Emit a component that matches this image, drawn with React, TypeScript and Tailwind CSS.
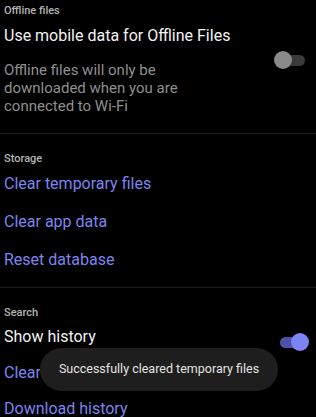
import React from "react";

function Toggle({ on }: { on: boolean }) {
  return (
    <div className="relative w-[36px] h-[18px] shrink-0">
      <div
        className={
          on
            ? "absolute left-[6px] top-[4px] w-[25px] h-[11px] rounded-full bg-[#4d52a8]"
            : "absolute left-[6px] top-[4px] w-[25px] h-[11px] rounded-full bg-[#3a3a3a]"
        }
      />
      <div
        className={
          on
            ? "absolute left-[17px] top-0 w-[18px] h-[18px] rounded-full bg-[#7c84f4]"
            : "absolute left-0 top-0 w-[18px] h-[18px] rounded-full bg-[#8a8a8a]"
        }
      />
    </div>
  );
}

function SectionHeader({ children }: { children: React.ReactNode }) {
  return (
    <div className="h-[14px] flex items-center text-[11px] font-medium text-[#b4b4b4] leading-none">
      {children}
    </div>
  );
}

function LinkRow({ label, h = "h-[38px]" }: { label: string; h?: string }) {
  return (
    <div className={`${h} flex items-center text-[16px] text-[#7d84ef]`}>{label}</div>
  );
}

export default function App() {
  return (
    <div
      className="relative w-[316px] h-[417px] overflow-hidden bg-black"
      style={{ fontFamily: "Roboto, 'Noto Sans', sans-serif" }}
    >
      <div className="pl-[4px]">
        {/* Offline files */}
        <div className="h-[22px] flex items-center text-[11px] font-medium text-[#b4b4b4]">
          Offline files
        </div>
        <div className="flex justify-between">
          <div>
            <div className="h-[28px] flex items-center text-[16px] text-[#f2f2f2]">
              Use mobile data for Offline Files
            </div>
            <div className="mt-[11px] w-[200px] text-[15px] leading-[18px] text-[#8f8f8f]">
              Offline files will only be downloaded when you are connected to Wi-Fi
            </div>
          </div>
          <div className="mt-[29px] mr-[6px]">
            <Toggle on={false} />
          </div>
        </div>
      </div>

      <div className="mt-[18px] h-px bg-[#1c1c1c]" />

      {/* Storage */}
      <div className="pl-[4px] pt-[17px]">
        <SectionHeader>Storage</SectionHeader>
        <LinkRow label="Clear temporary files" />
        <LinkRow label="Clear app data" />
        <LinkRow label="Reset database" />
      </div>

      <div className="mt-[8px] h-px bg-[#1c1c1c]" />

      {/* Search */}
      <div className="pl-[4px] pt-[17px]">
        <SectionHeader>Search</SectionHeader>
        <div className="h-[36px] flex justify-between">
          <span className="self-center text-[16px] text-[#f2f2f2]">Show history</span>
          <div className="mt-[14px] mr-[6px]">
            <Toggle on={true} />
          </div>
        </div>
        <LinkRow label="Clear search history" h="h-[36px]" />
        <LinkRow label="Download history" h="h-[36px]" />
      </div>

      {/* Snackbar */}
      <div className="absolute left-[40px] top-[348px] w-[238px] h-[43px] rounded-[22px] bg-[#1e1e1e] flex items-center justify-center text-[12.5px] text-[#e2e2e2]">
        Successfully cleared temporary files
      </div>
    </div>
  );
}
